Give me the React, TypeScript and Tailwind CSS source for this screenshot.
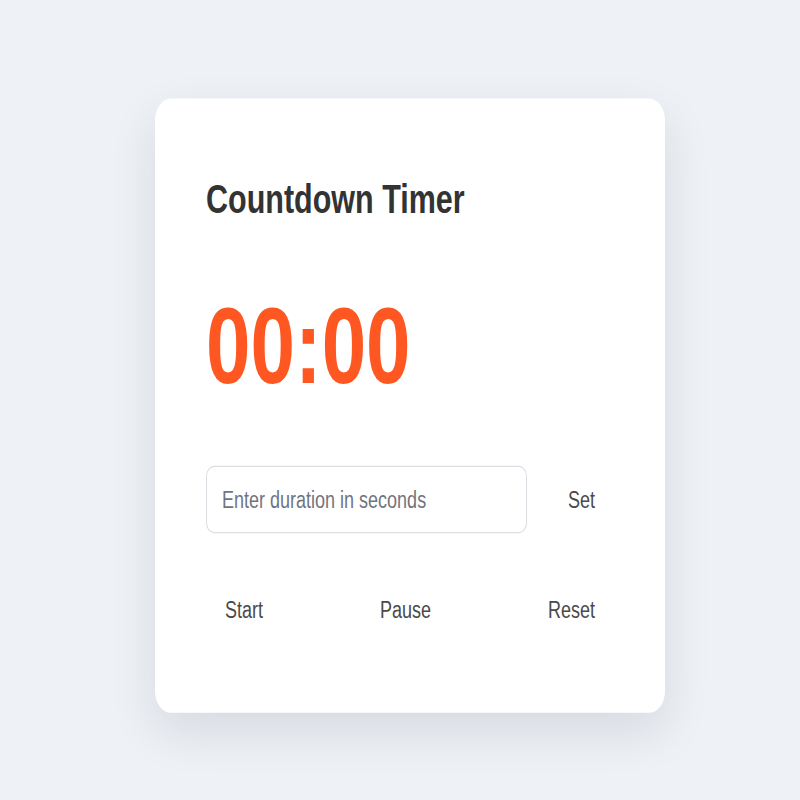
import React, { useEffect, useState } from "react";

const pad = (n: number) => String(n).padStart(2, "0");

export default function App() {
  const [duration, setDuration] = useState(0);
  const [remaining, setRemaining] = useState(0);
  const [input, setInput] = useState("");
  const [running, setRunning] = useState(false);

  useEffect(() => {
    if (!running) return;
    const id = setInterval(() => {
      setRemaining((r) => {
        if (r <= 1) {
          setRunning(false);
          return 0;
        }
        return r - 1;
      });
    }, 1000);
    return () => clearInterval(id);
  }, [running]);

  const setTimer = () => {
    const secs = parseInt(input, 10);
    if (Number.isNaN(secs) || secs < 0) return;
    setDuration(secs);
    setRemaining(secs);
    setRunning(false);
  };

  const minutes = Math.floor(remaining / 60);
  const seconds = remaining % 60;

  return (
    <div className="w-full h-[800px] overflow-hidden bg-[#eef1f5]">
      <div className="w-full h-[593px] origin-top scale-y-[1.35] flex justify-center pt-[73px] pl-[20px] font-['Liberation_Sans',Arial,sans-serif]">
        <div className="w-[510px] h-fit rounded-2xl bg-white px-[51px] pt-[56px] pb-[56px] shadow-[0_14px_40px_rgba(30,40,60,0.11)]">
          <h1 className="text-[30.5px] leading-[36px] font-bold text-[#333]">
            Countdown Timer
          </h1>

          <div className="mt-[52px] text-[80px] leading-[80px] font-bold text-[#ff5722]">
            {pad(minutes)}:{pad(seconds)}
          </div>

          <div className="mt-[48px] flex items-center gap-[22px]">
            <input
              type="number"
              value={input}
              onChange={(e) => setInput(e.target.value)}
              placeholder="Enter duration in seconds"
              className="h-[50px] flex-1 rounded-lg border border-[#dadde2] px-[15px] text-[18px] text-[#333] placeholder:text-[#6f7580] outline-none"
            />
            <button
              onClick={setTimer}
              className="px-[19px] py-2 text-[18px] leading-6 text-[#4a4a4a]"
            >
              Set
            </button>
          </div>

          <div className="mt-[37px] flex items-center justify-between">
            <button
              onClick={() => remaining > 0 && setRunning(true)}
              className="px-[19px] py-2 text-[18px] leading-6 text-[#4a4a4a]"
            >
              Start
            </button>
            <button
              onClick={() => setRunning(false)}
              className="px-[19px] py-2 text-[18px] leading-6 text-[#4a4a4a]"
            >
              Pause
            </button>
            <button
              onClick={() => {
                setRunning(false);
                setRemaining(duration);
              }}
              className="px-[19px] py-2 text-[18px] leading-6 text-[#4a4a4a]"
            >
              Reset
            </button>
          </div>
        </div>
      </div>
    </div>
  );
}
